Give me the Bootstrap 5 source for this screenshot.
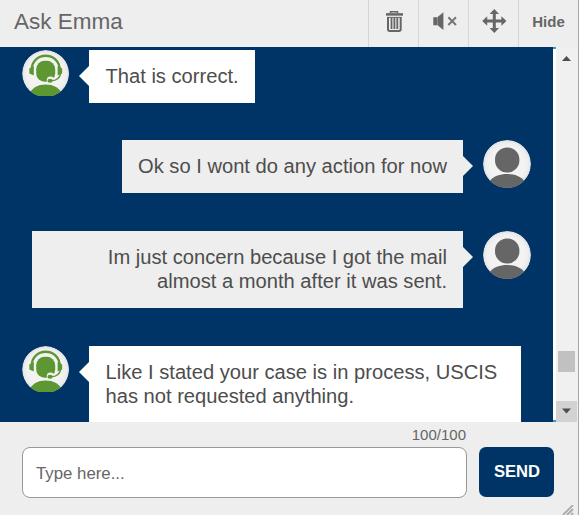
<!DOCTYPE html>
<html lang="en">
<head>
<meta charset="utf-8">
<meta name="viewport" content="width=device-width, initial-scale=1">
<title>Ask Emma</title>
<link rel="stylesheet" href="https://cdn.jsdelivr.net/npm/bootstrap@5.3.0/dist/css/bootstrap.min.css">
<style>
body{font-family:"Liberation Sans",Arial,sans-serif;color:#4d4d4d;background:#eee}
.chat-shell{height:515px;width:579px;background:#eee;border-right:1px solid #a6a6a6}
.chat-head{height:47px}
.chat-title{font-size:22.5px;line-height:27px;color:#666;padding:8px 0 0 14px}
.tool{width:50px;height:47px;border:0;border-left:1px solid #d6d6d6;background:transparent;color:#666}
.tool-hide{width:60px;font-size:15px;font-weight:700;line-height:18px;padding:0 0 3px}
.chat-main{height:375px}
.log{width:553px;background:#036;padding:3px 22px 0;line-height:24px;font-size:20.15px}
.avatar{width:48px;height:48px;flex:none}
.msg{position:relative;padding:14px 16px 15px 16.5px;background:#fff;color:#4d4d4d;white-space:nowrap}
.bot .msg{margin-left:19px}
.me .msg{margin-right:20px;background:#eee;text-align:right}
.msg::after{content:"";position:absolute;top:16px;border:10px solid transparent}
.bot .msg::after{right:100%;border-right-color:#fff;border-left-width:0}
.me .msg::after{left:100%;border-left-color:#eee;border-right-width:0}
.turn{margin-top:38px}
.turn:nth-child(2){margin-top:37px}
.wide-msg{width:432px}
.me .wide-msg{width:431px}
.strip{width:3px;background:#fff;border-top:2px solid #39c;border-bottom:2px solid #39c}
.track{width:21px;background:#f0f0f0}
.arrow{height:21px}
.arrow-down{background:#d2d2d2}
.thumb{width:17px;height:21px;background:#c1c1c1;margin-bottom:29px}
.chat-foot{height:93px;padding:4px 0 0 22px}
.counter{width:444px;height:21px;font-size:15px;line-height:18px;color:#666}
.entry{width:445px;height:51px;border:1px solid #999;border-radius:8px;padding:3px 13px 0;font-size:16.8px;color:#4d4d4d;box-shadow:none}
.entry::placeholder{color:#666;opacity:1}
.send{width:75px;height:50px;margin-left:12px;border:0;border-radius:7px;background:#036;color:#fff;font-weight:700;font-size:16.6px;padding:1px 0 0 1px}
.grip{align-self:flex-end}
</style>
</head>
<body>
<svg class="position-absolute" width="0" height="0" aria-hidden="true">
<defs>
<radialGradient id="disc"><stop offset=".72" stop-color="#f3f3f3"/><stop offset=".9" stop-color="#ededed"/><stop offset="1" stop-color="#d9dcdf"/></radialGradient>
<clipPath id="round"><circle cx="24" cy="24" r="24"/></clipPath>
<clipPath id="agentclip"><path d="M0 0H48V46H0z"/></clipPath>
<clipPath id="agentround"><circle cx="23.6" cy="23.6" r="23.5"/></clipPath>
<symbol id="agent" viewBox="0 0 48 48">
<g clip-path="url(#agentclip)"><g clip-path="url(#agentround)">
<circle cx="23.6" cy="23.6" r="23.5" fill="url(#disc)"/>
<rect x="14.2" y="10.8" width="19" height="21" rx="8.5" fill="#5d9732"/>
<path d="M9.7 20C9.7 1 37.7 1 37.7 20" fill="none" stroke="#5d9732" stroke-width="2.3"/>
<path d="M7.3 18.5 11.8 16V25.5L7.3 23.5zM40.2 18.5 35.6 16V25.5L40.2 23.5z" fill="#5d9732"/>
<path d="M37 26C36 29 34 30.8 29 31" fill="none" stroke="#f3f3f3" stroke-width="4"/>
<ellipse cx="28.5" cy="30.2" rx="3.8" ry="3.6" fill="#f3f3f3"/>
<path d="M38.6 23C38 28 34 30.7 29 30.8" fill="none" stroke="#5d9732" stroke-width="1.5"/>
<ellipse cx="28" cy="30.7" rx="2.6" ry="2" fill="#5d9732"/>
<path d="M7 46C9 37.5 16 34.5 23.6 34.5S38.5 37.5 40.5 46z" fill="#5d9732"/>
</g></g>
</symbol>
<symbol id="person" viewBox="0 0 48 48">
<g clip-path="url(#round)"><circle cx="24" cy="24" r="24" fill="url(#disc)"/>
<rect x="12" y="7.6" width="24.4" height="25" rx="12" fill="#666"/>
<path d="M6 42C10 36 17 34 24 34S38 36 42 42V48H6z" fill="#666"/></g>
</symbol>
</defs>
</svg>
<div class="chat-shell d-flex flex-column overflow-hidden">
  <header class="chat-head d-flex">
    <div class="chat-title flex-grow-1">Ask Emma</div>
    <button class="tool p-0" aria-label="Clear"><svg class="d-block" width="49" height="47" viewBox="0 0 49 47"><g fill="none" stroke="currentColor"><path d="M21.5 13V11.7H28.5V13" stroke-width="1.5"/><path d="M17 14.4H34" stroke-width="2.5"/><path d="M19 17V29.3Q19 31 20.7 31H30Q31.7 31 31.7 29.3V17" stroke-width="2"/><path d="M18.2 17.4H32.6" stroke-width="1"/><path d="M22.5 18V29M25.4 18V29M28.3 18V29" stroke-width="1.8"/></g></svg></button>
    <button class="tool p-0" aria-label="Mute"><svg class="d-block" width="49" height="47" viewBox="0 0 49 47"><path d="M14.3 17.2H18.3V25.3H14.3zM18.6 17 24.4 12.2V30L18.6 25.3z" fill="currentColor"/><path d="M29.3 17.3 37 25M37 17.3 29.3 25" stroke="#777" stroke-width="2"/></svg></button>
    <button class="tool p-0" aria-label="Move"><svg class="d-block" width="49" height="47" viewBox="0 0 49 47"><path d="M25.3 11V31M15.3 21H35.3" stroke="currentColor" stroke-width="3"/><path d="M25.3 9 30 14H20.6zM25.3 33 30 28H20.6zM13.2 21 18.2 16.3V25.7zM37.4 21 32.4 16.3V25.7z" fill="currentColor"/></svg></button>
    <button class="tool tool-hide">Hide</button>
  </header>
  <main class="chat-main d-flex overflow-hidden">
    <section class="log overflow-hidden">
      <div class="bot d-flex"><svg class="avatar"><use href="#agent"/></svg><div class="msg">That is correct.</div></div>
      <div class="me d-flex justify-content-end turn"><div class="msg">Ok so I wont do any action for now</div><svg class="avatar"><use href="#person"/></svg></div>
      <div class="me d-flex justify-content-end turn"><div class="msg wide-msg">Im just concern because I got the mail<br>almost a month after it was sent.</div><svg class="avatar"><use href="#person"/></svg></div>
      <div class="bot d-flex turn"><svg class="avatar"><use href="#agent"/></svg><div class="msg wide-msg">Like I stated your case is in process, USCIS<br>has not requested anything.</div></div>
    </section>
    <div class="strip"></div>
    <div class="track d-flex flex-column align-items-center">
      <div class="arrow w-100"><svg class="d-block" width="21" height="21"><path d="M6 14 10.5 9 15 14z" fill="#4d4d4d"/></svg></div>
      <div class="thumb mt-auto"></div>
      <div class="arrow arrow-down w-100"><svg class="d-block" width="21" height="21"><path d="M6 7.5H15L10.5 12.5z" fill="#4d4d4d"/></svg></div>
    </div>
  </main>
  <footer class="chat-foot d-flex">
    <div>
      <div class="counter text-end">100/100</div>
      <div class="d-flex"><input class="form-control entry" placeholder="Type here..." aria-label="Message"><button class="send">SEND</button></div>
    </div>
    <svg class="grip ms-auto me-1" width="12" height="10"><path d="M1 10 11 0M5 10 11 4M9 10 11 8" stroke="#aaa" stroke-width="1.8"/></svg>
  </footer>
</div>
<script src="https://cdn.jsdelivr.net/npm/bootstrap@5.3.0/dist/js/bootstrap.bundle.min.js"></script>
</body>
</html>
